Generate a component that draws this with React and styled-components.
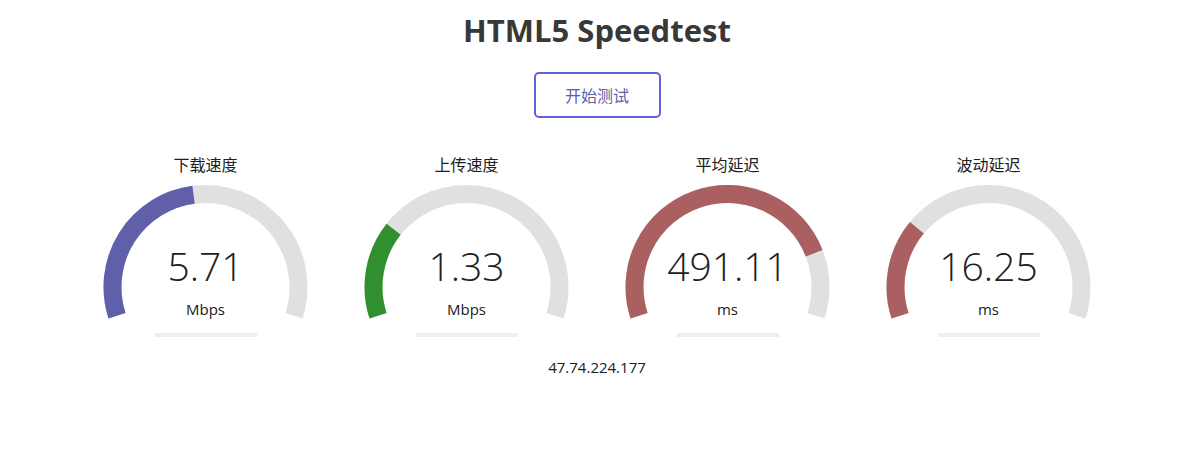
import React from "react";
import styled, { createGlobalStyle } from "styled-components";

const GlobalStyle = createGlobalStyle`
    html, body {
        margin: 0;
        padding: 0;
        background: #ffffff;
    }
    body {
        font-family: "Open Sans", "Noto Sans CJK SC", sans-serif;
        color: #202020;
    }
`

const Page = styled.div`
    display: flex;
    flex-direction: column;
    align-items: center;
    padding-left: 16px;
    text-align: center;
`

const Title = styled.h1`
    margin: 0;
    padding-top: 10px;
    font-family: "Open Sans", sans-serif;
    font-size: 31px;
    line-height: 40px;
    font-weight: 700;
    color: #383838;
`

const StartButton = styled.button`
    margin-top: 22px;
    width: 127px;
    height: 46px;
    box-sizing: border-box;
    border: 2px solid #6060dd;
    border-radius: 5px;
    background: #ffffff;
    color: #6060aa;
    font-family: "Noto Sans CJK SC", sans-serif;
    font-size: 16px;
    cursor: pointer;
`

const Gauges = styled.div`
    display: flex;
    justify-content: center;
    margin-top: 35px;
`

const TestArea = styled.div`
    position: relative;
    width: 261px;
    display: flex;
    flex-direction: column;
    align-items: center;
`

const TestName = styled.div`
    font-family: "Noto Sans CJK SC", sans-serif;
    font-size: 16px;
    line-height: 22px;
    color: #202020;
`

const Meter = styled.svg`
    display: block;
    width: 261px;
    height: 150px;
`

const MeterText = styled.div`
    position: absolute;
    left: 0;
    width: 100%;
    top: 87px;
    font-family: "Open Sans", sans-serif;
    font-size: 39px;
    font-weight: 300;
    line-height: 52px;
    color: #202020;
`

const Unit = styled.div`
    position: absolute;
    left: 0;
    width: 100%;
    top: 146px;
    font-family: "Open Sans", sans-serif;
    font-size: 15px;
    line-height: 20px;
    color: #202020;
`

const Progress = styled.div`
    margin-top: 8px;
    width: 102px;
    height: 4px;
    background: #eeeeee;
`

const Ip = styled.div`
    margin-top: 20px;
    font-family: "Open Sans", sans-serif;
    font-size: 15px;
    line-height: 20px;
    color: #202020;
`

// meter geometry, same sweep as the canvas gauge (-1.1π .. 0.1π)
const CX = 130.5
const CY = 112
const R = 93
const START = -198
const SPAN = 216

const point = (deg) => {
    const a = (deg * Math.PI) / 180
    return [CX + R * Math.cos(a), CY + R * Math.sin(a)]
}

const arcPath = (amount) => {
    const end = START + SPAN * amount
    const [x1, y1] = point(START)
    const [x2, y2] = point(end)
    const large = SPAN * amount > 180 ? 1 : 0
    return `M ${x1} ${y1} A ${R} ${R} 0 ${large} 1 ${x2} ${y2}`
}

const mbpsToAmount = (s) => 1 - 1 / Math.pow(1.3, Math.sqrt(s))
const msToAmount = (d) => 1 - 1 / Math.pow(1.08, Math.sqrt(d))

const tests = [
    { name: "下载速度", value: "5.71", unit: "Mbps", amount: mbpsToAmount(5.71), color: "#6060aa" },
    { name: "上传速度", value: "1.33", unit: "Mbps", amount: mbpsToAmount(1.33), color: "#309030" },
    { name: "平均延迟", value: "491.11", unit: "ms", amount: msToAmount(491.11), color: "#aa6060" },
    { name: "波动延迟", value: "16.25", unit: "ms", amount: msToAmount(16.25), color: "#aa6060" },
]

const Gauge = ({ name, value, unit, amount, color }) => (
    <TestArea>
        <TestName>{name}</TestName>
        <Meter viewBox="0 0 261 150">
            <path d={arcPath(1)} fill="none" stroke="#e0e0e0" strokeWidth="18" />
            <path d={arcPath(amount)} fill="none" stroke={color} strokeWidth="18" />
        </Meter>
        <MeterText>{value}</MeterText>
        <Unit>{unit}</Unit>
        <Progress />
    </TestArea>
)

const App = () => {
    return (
        <Page>
            <GlobalStyle />
            <Title>HTML5 Speedtest</Title>
            <StartButton>开始测试</StartButton>
            <Gauges>
                {tests.map((t) => (
                    <Gauge key={t.name} {...t} />
                ))}
            </Gauges>
            <Ip>47.74.224.177</Ip>
        </Page>
    )
}

export default App
